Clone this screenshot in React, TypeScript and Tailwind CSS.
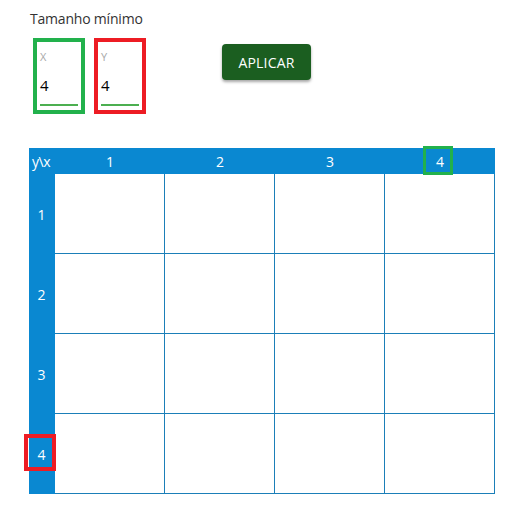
import { ReactNode } from 'react';

const cols = [1, 2, 3, 4];
const rows = [1, 2, 3, 4];

function SizeField({ label, value, frame }: { label: string; value: string; frame: string }) {
    return (
        <div className={`relative h-[76px] w-[52px] border-4 ${frame}`}>
            <div className="absolute left-[3px] top-[8px] text-[11px] leading-[14px] text-[#a8a8a8]">{label}</div>
            <div className="absolute left-[3px] top-[34px] text-[15px] leading-[18px] text-black">{value}</div>
            <div className="absolute bottom-[4px] left-[3px] h-[2px] w-[38px] bg-[#4caf50]" />
        </div>
    );
}

function Mark({ className, children }: { className: string; children: ReactNode }) {
    return <div className={`absolute flex items-center justify-center ${className}`}>{children}</div>;
}

export default function App() {
    return (
        <div className="h-[505px] w-[514px] bg-white font-['Open_Sans','Noto_Sans',sans-serif] text-[#333]">
            <div className="pl-[30px] pt-[9px] text-[14px] leading-[20px] tracking-[-0.2px]">Tamanho mínimo</div>

            <div className="mt-[9px] flex items-start pl-[33px]">
                <div className="flex gap-[9px]">
                    <SizeField label="X" value="4" frame="border-[#22b14c]" />
                    <SizeField label="Y" value="4" frame="border-[#ed1c24]" />
                </div>
                <button
                    type="button"
                    className="ml-[76px] mt-[6px] h-[36px] w-[89px] rounded-[4px] bg-[#1b5e20] text-[14px] tracking-[0.2px] text-white shadow-[0_2px_3px_rgba(0,0,0,0.35)]"
                >
                    APLICAR
                </button>
            </div>

            <div className="ml-[29px] mt-[34px] grid w-[466px] grid-cols-[26px_repeat(4,110px)] text-[14px] text-white">
                <div className="flex h-[26px] items-center bg-[#0a88d1] pl-[3px] tracking-[-0.5px]">y\x</div>
                {cols.map((c) => (
                    <div key={c} className="relative flex h-[26px] items-center justify-center bg-[#0a88d1]">
                        {c}
                        {c === 4 && <Mark className="left-[38px] top-[-2px] h-[29px] w-[30px] border-[3px] border-[#22b14c]">{null}</Mark>}
                    </div>
                ))}
                {rows.map((r) => (
                    <div key={r} className="contents">
                        <div className="relative flex h-[80px] items-center justify-center bg-[#0a88d1] pr-[1px]">
                            {r}
                            {r === 4 && <Mark className="left-[-5px] top-[20px] h-[37px] w-[32px] border-[4px] border-[#ed1c24]">{null}</Mark>}
                        </div>
                        {cols.map((c) => (
                            <div
                                key={c}
                                className={`h-[80px] border-b border-r border-[#1b7fb8] ${c === 1 ? 'border-l-0' : ''}`}
                            />
                        ))}
                    </div>
                ))}
            </div>
        </div>
    );
}
